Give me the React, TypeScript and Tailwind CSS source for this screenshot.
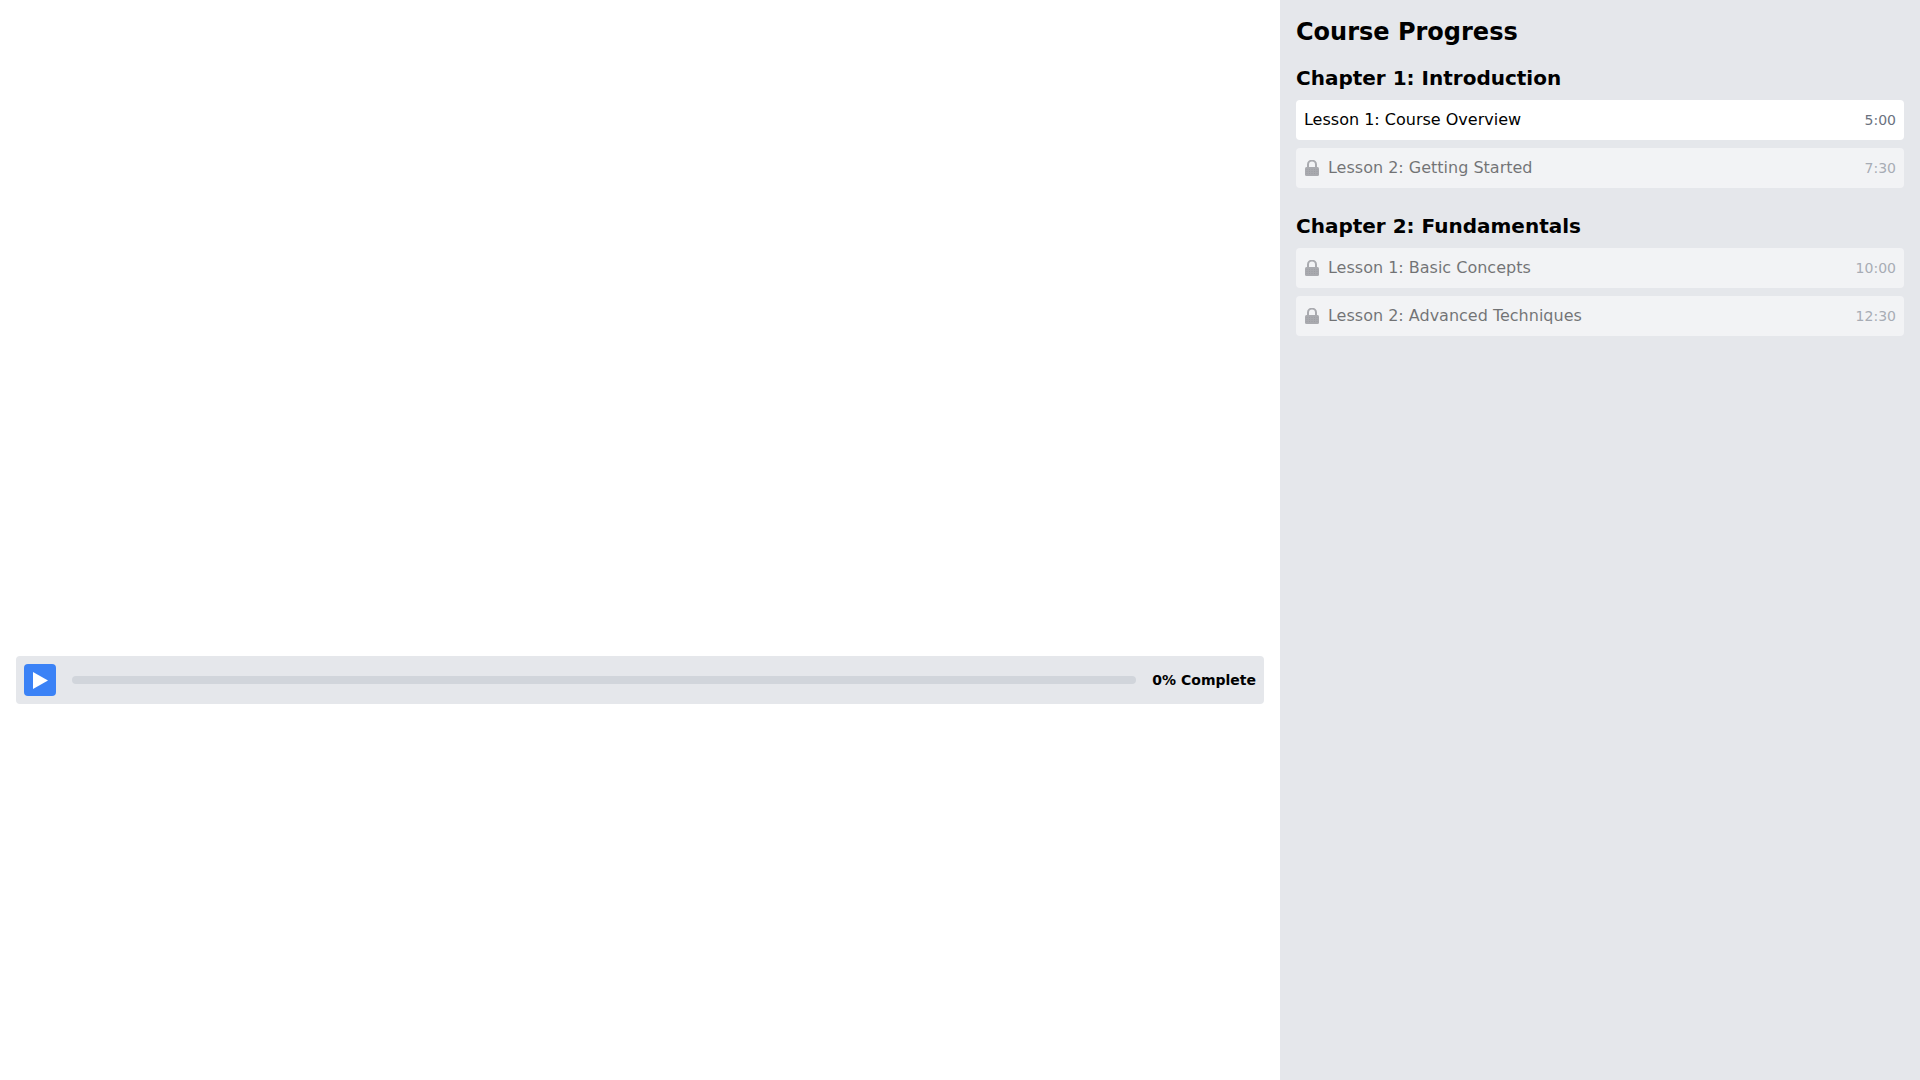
const chapters = [
    {
        title: "Chapter 1: Introduction",
        lessons: [
            { name: "Lesson 1: Course Overview", time: "5:00", locked: false },
            { name: "Lesson 2: Getting Started", time: "7:30", locked: true },
        ],
    },
    {
        title: "Chapter 2: Fundamentals",
        lessons: [
            { name: "Lesson 1: Basic Concepts", time: "10:00", locked: true },
            { name: "Lesson 2: Advanced Techniques", time: "12:30", locked: true },
        ],
    },
]

const LockIcon = () => (
    <svg viewBox="0 0 16 16" className="w-4 h-4 mr-2 shrink-0">
        <path d="M4 8V4.6a4 4 0 0 1 8 0V8" fill="none" stroke="#6f6f74" strokeWidth="2" />
        <rect x="1" y="7" width="14" height="9" rx="1.5" fill="#6f6f74" />
        <g fill="#56565c">
            {[9, 11, 13].map((y) =>
                [3, 5.5, 8, 10.5, 13].map((x) => <circle key={`${x}-${y}`} cx={x} cy={y + 0.5} r="0.55" />)
            )}
        </g>
    </svg>
)

export default function App() {
    return (
        <div className="flex h-screen bg-white text-black font-['DejaVu_Sans',sans-serif]">
            <div className="w-2/3 p-4">
                <div className="h-[624px] mb-4"></div>
                <div className="flex items-center gap-4 p-2 bg-[#e5e7eb] rounded">
                    <button className="w-8 h-8 flex items-center justify-center bg-[#3b82f6] rounded">
                        <svg viewBox="0 0 15 17" className="w-[15px] h-[17px]">
                            <polygon points="0,0 15,8.5 0,17" fill="#fff" />
                        </svg>
                    </button>
                    <div className="flex-1 h-2 bg-[#d1d5db] rounded-full"></div>
                    <span className="text-sm font-bold">0% Complete</span>
                </div>
            </div>
            <div className="w-1/3 p-4 bg-[#e5e7eb]">
                <h2 className="text-2xl font-bold mb-4">Course Progress</h2>
                {chapters.map((c) => (
                    <div key={c.title} className="mb-6">
                        <h3 className="text-xl font-bold mb-2">{c.title}</h3>
                        <div className="flex flex-col gap-2">
                            {c.lessons.map((l) => (
                                <div key={l.name} className={`flex items-center justify-between p-2 bg-white rounded ${l.locked ? "opacity-50" : ""}`}>
                                    <div className="flex items-center">
                                        {l.locked && <LockIcon />}
                                        <span>{l.name}</span>
                                    </div>
                                    <span className="text-sm text-[#6b7280]">{l.time}</span>
                                </div>
                            ))}
                        </div>
                    </div>
                ))}
            </div>
        </div>
    )
}
